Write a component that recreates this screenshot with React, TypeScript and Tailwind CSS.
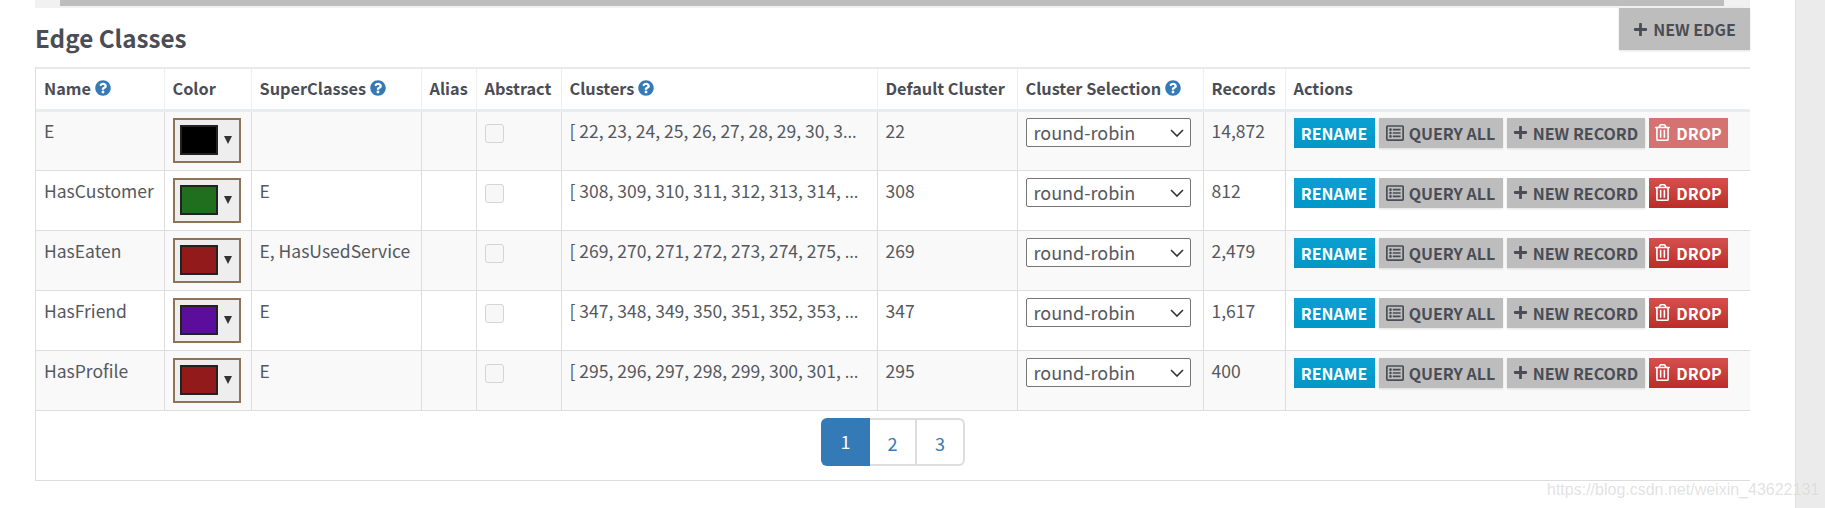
import { FaPlus, FaQuestionCircle, FaRegListAlt, FaRegTrashAlt } from 'react-icons/fa'

const rows = [
  { name: 'E', color: 'bg-[#000000]', supers: '', clusters: '[ 22, 23, 24, 25, 26, 27, 28, 29, 30, 3', def: '22', records: '14,872', disabled: true },
  { name: 'HasCustomer', color: 'bg-[#1f6f1f]', supers: 'E', clusters: '[ 308, 309, 310, 311, 312, 313, 314, ', def: '308', records: '812' },
  { name: 'HasEaten', color: 'bg-[#931a1a]', supers: 'E, HasUsedService', clusters: '[ 269, 270, 271, 272, 273, 274, 275, ', def: '269', records: '2,479' },
  { name: 'HasFriend', color: 'bg-[#5b0d9c]', supers: 'E', clusters: '[ 347, 348, 349, 350, 351, 352, 353, ', def: '347', records: '1,617' },
  { name: 'HasProfile', color: 'bg-[#931a1a]', supers: 'E', clusters: '[ 295, 296, 297, 298, 299, 300, 301, ', def: '295', records: '400' },
]

const headers = [
  { label: 'Name', help: true },
  { label: 'Color' },
  { label: 'SuperClasses', help: true },
  { label: 'Alias' },
  { label: 'Abstract' },
  { label: 'Clusters', help: true },
  { label: 'Default Cluster' },
  { label: 'Cluster Selection', help: true },
  { label: 'Records' },
  { label: 'Actions' },
]

function ColorPicker({ color }: { color: string }) {
  return (
    <div className="flex h-[45px] w-[68px] items-center border-2 border-[#8f7358] bg-[#eeeeee] pl-[5px]">
      <div className={`h-[30px] w-[38px] border-2 border-[#222222] ${color}`} />
      <span className="ml-[6px] h-0 w-0 border-x-[4px] border-t-[8px] border-x-transparent border-t-[#333333]" />
    </div>
  )
}

function Actions({ disabled }: { disabled?: boolean }) {
  const grey = 'flex h-[30px] items-center justify-center gap-[5px] bg-[#bdbdbd] text-[#4a4d55] shadow-[0_1px_2px_rgba(0,0,0,0.12)]'
  return (
    <div className="flex gap-[4px] text-[16px] font-bold leading-[30px]">
      <button className="h-[30px] w-[81px] bg-gradient-to-b from-[#0ca0d2] to-[#0096c8] text-white">RENAME</button>
      <button className={`${grey} w-[124px]`}>
        <FaRegListAlt className="text-[18px]" /> QUERY ALL
      </button>
      <button className={`${grey} w-[138px]`}>
        <FaPlus className="text-[15px]" /> NEW RECORD
      </button>
      {disabled ? (
        <button className="flex h-[30px] w-[79px] items-center justify-center gap-[5px] bg-[#d47371] text-white">
          <FaRegTrashAlt className="text-[17px]" /> DROP
        </button>
      ) : (
        <button className="flex h-[30px] w-[79px] items-center justify-center gap-[5px] bg-gradient-to-b from-[#d5504e] to-[#bb2c27] text-white">
          <FaRegTrashAlt className="text-[17px]" /> DROP
        </button>
      )}
    </div>
  )
}

export default function App() {
  return (
    <div className="flex h-[508px] w-[1825px] overflow-hidden bg-white [font-family:'Noto_Sans_CJK_SC',sans-serif] text-[17.5px] text-[#55585e] relative">
      <div className="w-[1795px] pl-[35px] pr-[45px]">
        <div className="flex h-[8px] bg-[#f1f1f1]">
          <div className="w-[25px]" />
          <div className="h-[6px] flex-1 bg-[#bdbdbd]" />
          <div className="w-[26px]" />
        </div>

        <div className="flex h-[42px] items-center justify-between">
          <h3 className="pt-[18px] text-[24.2px] font-bold leading-[30px] text-[#4a4d55]">Edge Classes</h3>
          <button className="flex h-[42px] w-[131px] items-center justify-center gap-[5px] bg-[#bdbdbd] text-[16px] font-bold text-[#4a4d55] shadow-[0_1px_2px_rgba(0,0,0,0.12)]">
            <FaPlus className="text-[15px]" /> NEW EDGE
          </button>
        </div>

        <div className="mt-[17px] overflow-hidden border-b border-l border-[#dddddd] h-[414px]">
          <table className="w-[1714px] table-fixed border-collapse">
            <colgroup>
              <col className="w-[128px]" />
              <col className="w-[87px]" />
              <col className="w-[170px]" />
              <col className="w-[55px]" />
              <col className="w-[85px]" />
              <col className="w-[316px]" />
              <col className="w-[140px]" />
              <col className="w-[186px]" />
              <col className="w-[82px]" />
              <col className="w-[465px]" />
            </colgroup>
            <thead>
              <tr className="h-[42px] border-t-[2px] border-b-[3px] border-t-[#e9e9e9] border-b-[#e9ecec]">
                {headers.map((h) => (
                  <th key={h.label} className="border-r border-[#eeeeee] px-[8px] pb-[2px] text-left text-[16.3px] font-bold leading-[24px] whitespace-nowrap text-[#4a4d55] last:border-r-0">
                    <span className="inline-flex items-center gap-[4px]">
                      {h.label}
                      {h.help && <FaQuestionCircle className="text-[16px] text-[#337ab7]" />}
                    </span>
                  </th>
                ))}
              </tr>
            </thead>
            <tbody>
              {rows.map((r, i) => {
                // the thick header border eats a pixel of the first row
                const pad = i === 0 ? 'pt-[6px]' : 'pt-[7px]'
                const boxPad = i === 0 ? 'pt-[12px]' : 'pt-[13px]'
                return (
                  <tr key={r.name} className={`h-[60px] border-b border-[#dddddd] align-top ${i % 2 === 0 ? 'bg-[#f9f9f9]' : 'bg-white'}`}>
                    <td className={`border-r border-[#dddddd] px-[8px] leading-[26px] ${pad}`}>{r.name}</td>
                    <td className={`border-r border-[#dddddd] px-[8px] ${pad}`}>
                      <ColorPicker color={r.color} />
                    </td>
                    <td className={`border-r border-[#dddddd] px-[8px] leading-[26px] ${pad}`}>{r.supers}</td>
                    <td className="border-r border-[#dddddd]" />
                    <td className={`border-r border-[#dddddd] px-[8px] ${boxPad}`}>
                      <input type="checkbox" disabled className="block h-[19px] w-[19px] appearance-none rounded-[3px] border border-[#d5d5d5] bg-[#f7f7f7]" />
                    </td>
                    <td className={`overflow-hidden border-r border-[#dddddd] px-[8px] leading-[26px] whitespace-pre ${pad}`}>
                      {r.clusters}
                      <span className="[font-family:'Open_Sans',sans-serif]">…</span>
                    </td>
                    <td className={`border-r border-[#dddddd] px-[8px] leading-[26px] ${pad}`}>{r.def}</td>
                    <td className={`border-r border-[#dddddd] px-[8px] ${pad}`}>
                      <div className="relative w-[165px]">
                        <select defaultValue="round-robin" className="block h-[29px] w-full appearance-none rounded-[2px] border border-[#767676] bg-white pl-[7px] text-[18px]">
                          <option>round-robin</option>
                          <option>default</option>
                          <option>balanced</option>
                        </select>
                        <svg viewBox="0 0 14 8" className="pointer-events-none absolute top-[11px] right-[7px] h-[8px] w-[14px]" fill="none" stroke="#333333" strokeWidth="1.6">
                          <path d="M1 1l6 6 6-6" />
                        </svg>
                      </div>
                    </td>
                    <td className={`border-r border-[#dddddd] px-[8px] leading-[26px] ${pad}`}>{r.records}</td>
                    <td className={`px-[8px] ${pad}`}>
                      <Actions disabled={r.disabled} />
                    </td>
                  </tr>
                )
              })}
            </tbody>
          </table>

          <div className="ml-[785px] mt-[7px] flex h-[48px] w-[144px] text-[18px] leading-[46px]">
            <a className="w-[49px] rounded-l-[6px] bg-[#337ab7] text-center text-white">1</a>
            <a className="w-[47px] border-y-2 border-r-2 border-[#dddddd] text-center text-[#337ab7]">2</a>
            <a className="w-[48px] rounded-r-[6px] border-y-2 border-r-2 border-[#dddddd] text-center text-[#337ab7]">3</a>
          </div>
        </div>
      </div>

      <div className="w-[30px] border-l border-[#e2e2e2] bg-[#ebebeb]" />

      <span className="absolute left-[1547px] top-[479px] text-[16px] leading-[22px] [font-family:'Liberation_Sans',sans-serif] text-[rgba(190,190,190,0.45)] [text-shadow:0_0_1px_rgba(255,255,255,0.6)]">
        https://blog.csdn.net/weixin_43622131
      </span>
    </div>
  )
}
